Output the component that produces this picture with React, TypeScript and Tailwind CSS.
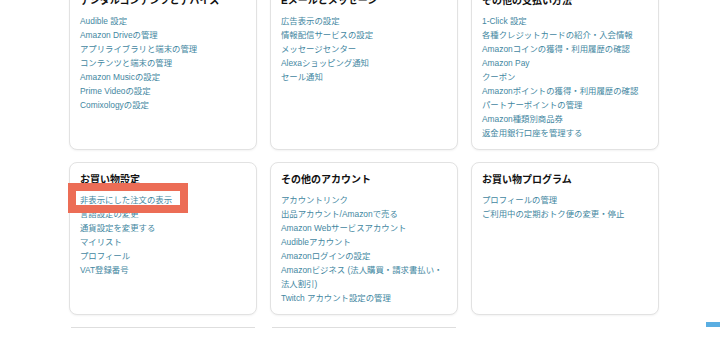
import React from "react";

type Section = { title: string; links: string[] };

const rows: Section[][] = [
  [
    {
      title: "デジタルコンテンツとデバイス",
      links: [
        "Audible 設定",
        "Amazon Driveの管理",
        "アプリライブラリと端末の管理",
        "コンテンツと端末の管理",
        "Amazon Musicの設定",
        "Prime Videoの設定",
        "Comixologyの設定",
      ],
    },
    {
      title: "Eメールとメッセージ",
      links: [
        "広告表示の設定",
        "情報配信サービスの設定",
        "メッセージセンター",
        "Alexaショッピング通知",
        "セール通知",
      ],
    },
    {
      title: "その他の支払い方法",
      links: [
        "1-Click 設定",
        "各種クレジットカードの紹介・入会情報",
        "Amazonコインの獲得・利用履歴の確認",
        "Amazon Pay",
        "クーポン",
        "Amazonポイントの獲得・利用履歴の確認",
        "パートナーポイントの管理",
        "Amazon種類別商品券",
        "返金用銀行口座を管理する",
      ],
    },
  ],
  [
    {
      title: "お買い物設定",
      links: [
        "非表示にした注文の表示",
        "言語設定の変更",
        "通貨設定を変更する",
        "マイリスト",
        "プロフィール",
        "VAT登録番号",
      ],
    },
    {
      title: "その他のアカウント",
      links: [
        "アカウントリンク",
        "出品アカウント/Amazonで売る",
        "Amazon Webサービスアカウント",
        "Audibleアカウント",
        "Amazonログインの設定",
        "Amazonビジネス (法人購買・請求書払い・法人割引)",
        "Twitch アカウント設定の管理",
      ],
    },
    {
      title: "お買い物プログラム",
      links: ["プロフィールの管理", "ご利用中の定期おトク便の変更・停止"],
    },
  ],
];

function Card({ section, highlight }: { section: Section; highlight?: boolean }) {
  return (
    <div className="relative rounded-[8px] border border-[#e2e2e2] bg-white px-[10px] pt-[10px] pb-[9px] shadow-[0_1px_2px_rgba(0,0,0,0.05)]">
      <h3 className="text-[10px] leading-[14px] font-bold text-[#111]">{section.title}</h3>
      <ul className="mt-[6px]">
        {section.links.map((l) => (
          <li key={l} className="text-[8.4px] leading-[14px] text-[#4387a1]">
            <a href="#">{l}</a>
          </li>
        ))}
      </ul>
      {highlight && (
        <div className="absolute left-[-2px] top-[20px] h-[30px] w-[120px] border-[8px] border-[#ec6d56]" />
      )}
    </div>
  );
}

export default function App() {
  return (
    <div
      className="relative h-[350px] w-[720px] overflow-hidden bg-white"
      style={{ fontFamily: '"Liberation Sans", "Noto Sans CJK JP", sans-serif' }}
    >
      <div className="-mt-[17px] pl-[69px]">
        <div className="grid grid-cols-[188px_188px_188px] gap-x-[13px] gap-y-3">
          {rows.map((row, ri) =>
            row.map((s, ci) => (
              <Card key={s.title} section={s} highlight={ri === 1 && ci === 0} />
            ))
          )}
          <div className="mx-[2px] h-[40px] border-t border-[#dedede]" />
          <div className="mx-[2px] h-[40px] border-t border-[#dedede]" />
        </div>
      </div>
      <div className="absolute right-0 top-[322px] h-[5px] w-[14px] bg-[#5aaee2]" />
    </div>
  );
}
